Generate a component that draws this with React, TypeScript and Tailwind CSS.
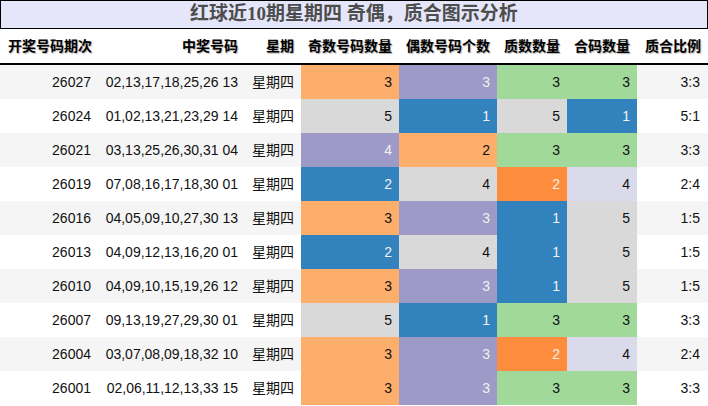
import React from "react";

type Row = {
  issue: string;
  numbers: string;
  odd: number;
  even: number;
  prime: number;
  composite: number;
  ratio: string;
};

const ROWS: Row[] = [
  { issue: "26027", numbers: "02,13,17,18,25,26 13", odd: 3, even: 3, prime: 3, composite: 3, ratio: "3:3" },
  { issue: "26024", numbers: "01,02,13,21,23,29 14", odd: 5, even: 1, prime: 5, composite: 1, ratio: "5:1" },
  { issue: "26021", numbers: "03,13,25,26,30,31 04", odd: 4, even: 2, prime: 3, composite: 3, ratio: "3:3" },
  { issue: "26019", numbers: "07,08,16,17,18,30 01", odd: 2, even: 4, prime: 2, composite: 4, ratio: "2:4" },
  { issue: "26016", numbers: "04,05,09,10,27,30 13", odd: 3, even: 3, prime: 1, composite: 5, ratio: "1:5" },
  { issue: "26013", numbers: "04,09,12,13,16,20 01", odd: 2, even: 4, prime: 1, composite: 5, ratio: "1:5" },
  { issue: "26010", numbers: "04,09,10,15,19,26 12", odd: 3, even: 3, prime: 1, composite: 5, ratio: "1:5" },
  { issue: "26007", numbers: "09,13,19,27,29,30 01", odd: 5, even: 1, prime: 3, composite: 3, ratio: "3:3" },
  { issue: "26004", numbers: "03,07,08,09,18,32 10", odd: 3, even: 3, prime: 2, composite: 4, ratio: "2:4" },
  { issue: "26001", numbers: "02,06,11,12,13,33 15", odd: 3, even: 3, prime: 3, composite: 3, ratio: "3:3" },
];

// tab20c shades, picked per column value
const BLUE = "bg-[#3182bd] text-[#f1f1f1]";
const ORANGE = "bg-[#fdae6b] text-[#111]";
const DARK_ORANGE = "bg-[#fd8d3c] text-[#f1f1f1]";
const PURPLE = "bg-[#9e9ac8] text-[#f1f1f1]";
const LIGHT_PURPLE = "bg-[#dadaeb] text-[#111]";
const GREEN = "bg-[#a1d99b] text-[#111]";
const GRAY = "bg-[#d9d9d9] text-[#111]";

const ODD_COLORS: Record<number, string> = { 2: BLUE, 3: ORANGE, 4: PURPLE, 5: GRAY };
const EVEN_COLORS: Record<number, string> = { 1: BLUE, 2: ORANGE, 3: PURPLE, 4: GRAY };
const PRIME_COLORS: Record<number, string> = { 1: BLUE, 2: DARK_ORANGE, 3: GREEN, 5: GRAY };
const COMPOSITE_COLORS: Record<number, string> = { 1: BLUE, 3: GREEN, 4: LIGHT_PURPLE, 5: GRAY };

const HEADERS = ["中奖号码", "星期", "奇数号码数量", "偶数号码个数", "质数数量", "合码数量", "质合比例"];

const GRID = "grid grid-cols-[98px_147px_56px_98px_98px_70px_70px_71px]";

function Cell({ value, color }: { value: number; color: string }) {
  return <div className={`flex items-center justify-end pr-[7px] ${color}`}>{value}</div>;
}

export default function App() {
  return (
    <div className="w-[708px] h-[406px] overflow-hidden bg-white text-[14px] text-[#111] [font-family:'Liberation_Sans','Noto_Sans_CJK_SC',sans-serif]">
      <div className="h-[29px] border border-black bg-[#e6e6fa] flex items-center justify-center text-[19px] font-bold text-[#4d4d4d] [font-family:'Liberation_Serif','Noto_Sans_CJK_SC',serif]">
        红球近10期星期四 奇偶，质合图示分析
      </div>

      <div className={`${GRID} h-[36px] border-b-2 border-black font-bold text-black [text-shadow:1px_1px_1px_#b0b0b0]`}>
        <div className="flex items-center pl-2">开奖号码期次</div>
        {HEADERS.map((h) => (
          <div key={h} className="flex items-center justify-end pr-[7px]">{h}</div>
        ))}
      </div>

      {ROWS.map((r, i) => (
        <div key={r.issue} className={`${GRID} h-[34px] ${i % 2 === 0 ? "bg-[#f5f5f5]" : "bg-white"}`}>
          <div className="flex items-center justify-end pr-[7px]">{r.issue}</div>
          <div className="flex items-center justify-end pr-[7px]">{r.numbers}</div>
          <div className="flex items-center justify-end pr-[7px]">星期四</div>
          <Cell value={r.odd} color={ODD_COLORS[r.odd]} />
          <Cell value={r.even} color={EVEN_COLORS[r.even]} />
          <Cell value={r.prime} color={PRIME_COLORS[r.prime]} />
          <Cell value={r.composite} color={COMPOSITE_COLORS[r.composite]} />
          <div className="flex items-center justify-end pr-2">{r.ratio}</div>
        </div>
      ))}
    </div>
  );
}
